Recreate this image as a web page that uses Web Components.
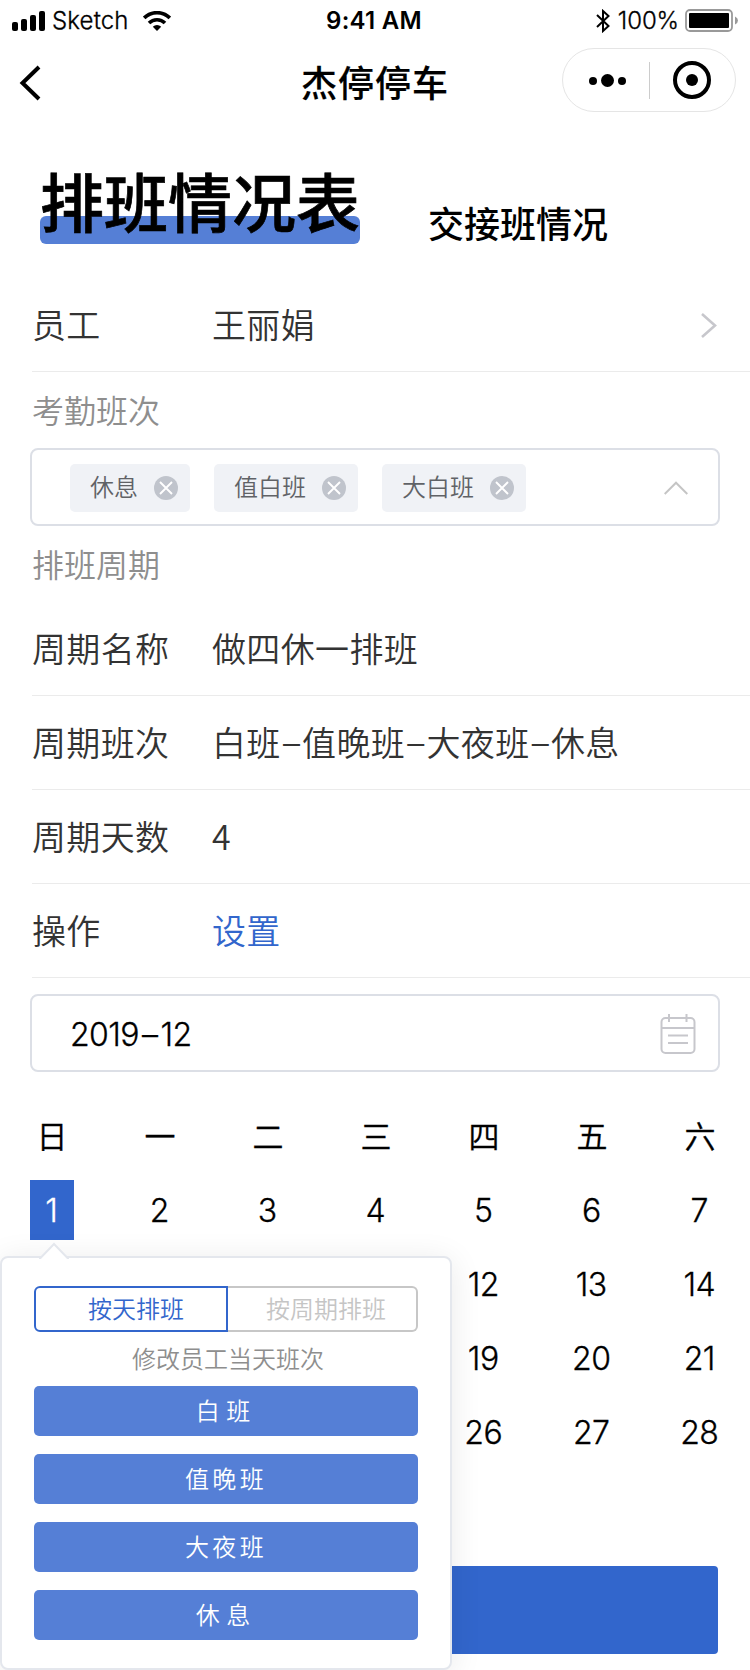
<!DOCTYPE html>
<html lang="zh-CN">
<head>
<meta charset="utf-8">
<title>杰停停车</title>
<style>
html,body{margin:0;padding:0;background:#fff}
body{width:750px;height:1670px;overflow:hidden;font-family:Inter,"Noto Sans CJK SC",sans-serif;color:#333}
</style>
</head>
<body>
<shift-page></shift-page>
<script>
const define=(name,css,html)=>customElements.define(name,class extends HTMLElement{
  constructor(){
    super();
    const t=document.createElement('template');
    t.innerHTML=`<style>*{box-sizing:border-box}svg{display:block;flex:none}${css}</style>${html}`;
    this.attachShadow({mode:'open'}).append(t.content.cloneNode(true));
  }
});

define('status-bar',`
:host{display:grid;grid-template-columns:1fr auto 1fr;align-items:center;height:41px;padding:0 12px 0 12px;color:#000;font-size:24px;line-height:30px;font-weight:350}
.l,.r{display:flex;align-items:center}.r{justify-content:flex-end}
.n{letter-spacing:.15px;margin:0 14px 0 7px;-webkit-text-stroke:.3px #000}
.t{font-weight:600;font-size:24px;letter-spacing:.25px;margin-right:2px}
.p{font-size:24px;letter-spacing:-.1px;margin:0 6px 0 8px;-webkit-text-stroke:.3px #000}`,`
<div class="l"><svg width="33" height="20" viewBox="0 0 33 20"><rect y="11" width="6" height="9" rx="2"/><rect x="9" y="8" width="6" height="12" rx="2"/><rect x="18" y="4" width="6" height="16" rx="2"/><rect x="27" width="6" height="20" rx="2"/></svg>
<span class="n">Sketch</span>
<svg width="28" height="20" viewBox="0 0 28 20" fill="none" stroke="#000" stroke-width="3.6"><path d="M1.2 6.9a18.2 18.2 0 0 1 25.6 0M6 12a11.4 11.4 0 0 1 16 0"/><path d="M14 20l-4.2-4.2a6 6 0 0 1 8.4 0z" fill="#000" stroke="none"/></svg></div>
<span class="t">9:41 AM</span>
<div class="r"><svg width="14" height="24" viewBox="0 0 14 24" fill="none" stroke="#000" stroke-width="2"><path d="M1 6l11.500 11L7 22V2l5.500 5L1 18"/></svg>
<span class="p">100%</span>
<svg width="53" height="23" viewBox="0 0 53 23"><rect x="1" y="1" width="46" height="21" rx="4" fill="none" stroke="#999" stroke-width="1.8"/><rect x="4" y="4" width="40" height="15" rx="1"/><path d="M50 7.500q3 1.500 3 4t-3 4z" fill="#999"/></svg></div>`);

define('nav-bar',`
:host{display:grid;grid-template-columns:1fr auto 1fr;align-items:center;height:84px;padding:0 14px 0 19px;color:#000}
b{font-weight:500;font-size:36px;letter-spacing:1px;line-height:50px;margin:2px 5px 0 0;-webkit-text-stroke:.2px #000}
.c{justify-self:end;margin-top:-6px;width:174px;height:64px;border:1px solid #e5e5e5;border-radius:32px;display:flex;align-items:center}
.c i{width:1px;height:37px;background:#ccc}`,`
<svg width="22" height="36" viewBox="0 0 22 36" fill="none" stroke="#000" stroke-width="4"><path d="M20 2L3.500 18 20 34"/></svg>
<b>杰停停车</b>
<div class="c"><svg width="86" height="62"><circle cx="30" cy="32" r="4"/><circle cx="44.500" cy="31.500" r="6.500"/><circle cx="59" cy="32" r="4"/></svg><i></i>
<svg width="84" height="62"><circle cx="42" cy="31" r="17" fill="none" stroke="#000" stroke-width="4"/><circle cx="42" cy="31" r="6"/></svg></div>`);

define('page-tabs',`
:host{display:flex;height:153px;padding:35px 0 0 40px;color:#000}
.a{width:320px;height:84px;font-size:64px;line-height:88px;font-weight:500;display:grid;-webkit-text-stroke:.7px #000}
.a span,.a i{grid-area:1/1}
.a i{align-self:start;margin-top:56px;height:28px;border-radius:6px;background:#557fd6}
.b{margin:38px 0 0 68px;font-size:36px;line-height:54px;font-weight:500}`,`
<div class="a"><i></i><span>排班情况表</span></div><div class="b">交接班情况</div>`);

define('info-row',`
:host{display:flex;align-items:center;height:94px;margin-left:32px;padding-right:32px;border-bottom:1px solid #ebebeb;font:350 34px/50px "Noto Sans CJK SC",sans-serif;letter-spacing:.35px;color:#333;box-sizing:border-box}
.k{width:180px}.v{flex:1}.k,.v{position:relative;top:-1px}
::slotted(b){font-weight:350;color:#3266cc}
::slotted(i){font-family:Inter;font-style:normal;font-size:34px;letter-spacing:0;line-height:0;margin:0 2.200px}`,`
<span class="k"><slot name="k"></slot></span><span class="v"><slot></slot></span><slot name="icon"></slot>`);

define('section-label',`
:host{display:block;margin-left:32px;font-size:32px;line-height:79px;height:76px;color:#8e8e8e;font-weight:350}`,`<slot></slot>`);

define('field-box',`
:host{display:flex;align-items:center;box-sizing:border-box;margin:0 30px;height:78px;border:2px solid #dcdfe6;border-radius:8px;padding:2px 22px 0 38px;gap:24px;color:#000}
.s{flex:1}`,`<slot></slot><div class="s"></div><slot name="icon"></slot>`);

define('shift-tag',`
:host{display:flex;align-items:center;gap:16px;box-sizing:border-box;height:48px;padding:0 12px 0 20px;border-radius:5px;background:#f0f2f6;color:#606266;font-size:24px;line-height:34px;font-weight:350}`,`
<span><slot></slot></span><svg width="24" height="24" viewBox="0 0 24 24"><circle cx="12" cy="12" r="12" fill="#c0c4cc"/><path d="M6 6l12 12M18 6L6 18" stroke="#fff" stroke-width="1.900"/></svg>`);

define('month-grid',`
:host{display:grid;grid-template-columns:repeat(7,108px);grid-template-rows:repeat(5,74px);margin-left:-2px;color:#000;font-size:32px;justify-items:center;align-items:center;line-height:62px;font-weight:350}
span{min-width:44px;height:60px;text-align:center;letter-spacing:-.5px;text-indent:-1.500px;-webkit-text-stroke:.3px currentColor}
.w{font-size:31px;letter-spacing:0;text-indent:0}
.on{background:#3266cc;color:#fff;width:44px}`,
['日','一','二','三','四','五','六'].map(d=>`<span class="w">${d}</span>`).join('')+
['1','2','3','4','5','6','7','','','','','12','13','14','','','','','19','20','21','','','','','26','27','28'].map(d=>`<span${d==='1'?' class="on"':''}>${d}</span>`).join(''));

define('shift-button',`
:host{display:block;height:50px;margin-bottom:18px;box-sizing:border-box;padding-right:6px;border-radius:5px;background:#557fd6;color:#fff;font-size:24px;line-height:52px;text-align:center;font-weight:350}
:host([wide]){letter-spacing:3.300px;padding-right:0}`,`<slot></slot>`);

define('shift-popover',`
:host{position:absolute;left:0;top:1256px;width:452px;height:414px;box-sizing:border-box;border:2px solid #e4e7ed;border-radius:8px;background:#fff;padding:28px 32px 0;box-shadow:0 4px 32px rgba(0,0,0,.09);font-size:24px;font-weight:350}
.arrow{position:absolute;left:36px;top:-16px}
.seg{display:flex;height:46px;line-height:44px}
.x{width:194px;border:2px solid #3266cc;border-radius:6px 0 0 6px;color:#3266cc;padding-left:52px}
.y{flex:1;border:2px solid #c7c7c7;border-left:0;border-radius:0 6px 6px 0;color:#c5c5c5;padding-left:38px}
p{margin:0;height:54px;line-height:56px;text-align:center;color:#8e8e8e;padding-left:4px}`,`
<svg class="arrow" width="32" height="17" viewBox="0 0 32 17"><path d="M2 17L16 2.500 30 17z" fill="#fff"/><path d="M1 16h1.500L16 2l13.500 14H31" fill="none" stroke="#e4e7ed" stroke-width="2"/></svg>
<div class="seg"><div class="x">按天排班</div><div class="y">按周期排班</div></div>
<p>修改员工当天班次</p>
<shift-button>白 班</shift-button><shift-button wide>值晚班</shift-button><shift-button wide>大夜班</shift-button><shift-button>休 息</shift-button>`);

define('shift-page',`
:host{display:block;position:relative;width:750px;height:1670px;background:#fff;overflow:hidden}
.date{font-size:32px;letter-spacing:-.55px;font-weight:350;-webkit-text-stroke:.3px #000}
.date i{font-style:normal;margin:0 3px}
.gap{height:16px}
.submit{margin:97px 32px 0;height:88px;border-radius:4px;background:#3266cc}
month-grid{margin-top:27px}`,`
<status-bar></status-bar><nav-bar></nav-bar><page-tabs></page-tabs>
<info-row><span slot="k">员工</span>王丽娟<svg slot="icon" style="margin-top:2px" width="18" height="27" viewBox="0 0 18 27" fill="none" stroke="#c7c7cc" stroke-width="2.600"><path d="M2 2l13 11.500L2 25"/></svg></info-row>
<section-label>考勤班次</section-label>
<field-box><shift-tag>休息</shift-tag><shift-tag>值白班</shift-tag><shift-tag>大白班</shift-tag><svg slot="icon" style="margin-right:8px" width="24" height="14" viewBox="0 0 24 14" fill="none" stroke="#c5c5c5" stroke-width="2"><path d="M.7 13L12 1.700 23.300 13"/></svg></field-box>
<section-label>排班周期</section-label>
<info-row><span slot="k">周期名称</span>做四休一排班</info-row>
<info-row><span slot="k">周期班次</span>白班<i>–</i>值晚班<i>–</i>大夜班<i>–</i>休息</info-row>
<info-row><span slot="k">周期天数</span>4</info-row>
<info-row><span slot="k">操作</span><b>设置</b></info-row>
<div class="gap"></div>
<field-box><span class="date">2019<i>–</i>12</span><svg slot="icon" width="36" height="41" viewBox="0 0 36 41" fill="none" stroke="#c7c7cc" stroke-width="2"><rect x="1.500" y="4" width="33" height="35" rx="4"/><path d="M9 0v8M26.500 0v8M1.500 14h33M8 21.500h20M8 29h20"/></svg></field-box>
<month-grid></month-grid>
<div class="submit"></div>
<shift-popover></shift-popover>`);
</script>
</body>
</html>
